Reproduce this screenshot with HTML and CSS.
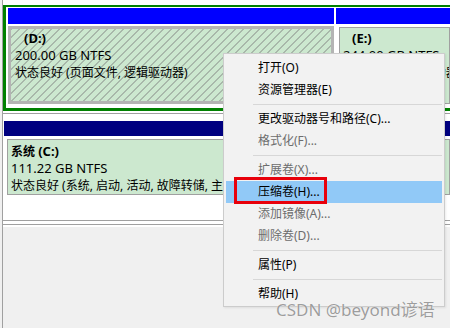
FILE: index.html
```html
<!DOCTYPE html>
<html lang="zh-CN">
<head>
<meta charset="utf-8">
<title>磁盘管理</title>
<link rel="stylesheet" href="styles.css">
</head>
<body>
<div class="screen">
  <div class="disk d1">
    <div class="ext">
      <div class="part p-d">
        <div class="hdr blue"></div>
        <div class="body sel">
          <div class="ln lbl"><b>(D:)</b></div>
          <div class="ln lat">200.00 GB NTFS</div>
          <div class="ln">状态良好 (页面文件, 逻辑驱动器)</div>
        </div>
      </div>
      <div class="part p-e">
        <div class="hdr blue"></div>
        <div class="body">
          <div class="ln lbl"><b>(E:)</b></div>
          <div class="ln lat">244.00 GB NTFS</div>
          <div class="ln">状态良好 (逻辑驱动器)</div>
        </div>
      </div>
    </div>
  </div>
  <div class="disk d2">
    <div class="part p-c">
      <div class="hdr navy"></div>
      <div class="body">
        <div class="ln"><b>系统 <span class="lat">(C:)</span></b></div>
        <div class="ln lat">111.22 GB NTFS</div>
        <div class="ln">状态良好 (系统, 启动, 活动, 故障转储, 主分区)</div>
      </div>
    </div>
  </div>
  <div class="sep"></div>

  <ul class="menu">
    <li class="item">打开(O)</li>
    <li class="item">资源管理器(E)</li>
    <li class="rule"></li>
    <li class="item">更改驱动器号和路径(C)...</li>
    <li class="item off">格式化(F)...</li>
    <li class="rule"></li>
    <li class="item off">扩展卷(X)...</li>
    <li class="item hot">压缩卷(H)...<span class="mark"></span></li>
    <li class="item off">添加镜像(A)...</li>
    <li class="item off">删除卷(D)...</li>
    <li class="rule"></li>
    <li class="item">属性(P)</li>
    <li class="rule"></li>
    <li class="item">帮助(H)</li>
  </ul>

  <div class="wm">CSDN @beyond谚语</div>
</div>
</body>
</html>
```
FILE: styles.css
```css
* { box-sizing: border-box; }
html, body { margin: 0; padding: 0; }
body {
  width: 450px;
  height: 328px;
  overflow: hidden;
  background: #f0f0f0;
  font-family: "Noto Sans", "Noto Sans CJK SC", sans-serif;
  font-size: 12px;
  color: #000;
}
.screen {
  position: relative;
  height: 328px;
  margin-left: 2px;
  border-left: 1px solid #a0a0a0;
}
.disk {
  background: #fff;
  overflow: hidden;
  border-bottom: 1px solid #a0a0a0;
}
.d1 { padding: 5px 0 2px 0; height: 114px; }
.ext {
  display: flex;
  gap: 2px;
  height: 106px;
  border: 3px solid #008000;
  border-top-width: 2px;
  border-right: 0;
  padding: 1px 0 4px 2px;
}
.part { display: flex; flex-direction: column; min-width: 0; }
.p-d { width: 326px; flex: none; }
.p-e { flex: 1; }
.hdr { height: 16px; flex: none; }
.blue { background: #0000ff; }
.navy { background: #000080; height: 15px; }
.body {
  flex: 1;
  margin: 3px 0 0 3px;
  border: 1px solid #a0a0a0;
  background: #cce8cf;
  padding: 2px 0 0 3px;
  white-space: nowrap;
  overflow: hidden;
}
.body.sel {
  margin: 2px 0 0 0;
  border: 3px solid #b4b4b4;
  padding: 1px 0 0 4px;
  background: repeating-linear-gradient(-45deg, #cce8cf 0 4.7px, #a8b8aa 4.7px 5.66px);
}
.ln { line-height: 17px; height: 17px; }
.lat { font-size: 13px; }
.lbl b { margin-left: 9px; font-size: 13px; }
b { font-weight: 700; }

.d2 { padding: 7px 0 4px 1px; height: 107px; }
.p-c .body { height: 77px; padding-top: 3px; }

.sep {
  height: 6px;
  background: #fff;
  border-top: 3px solid #fff;
  border-bottom: 2px solid #fff;
  box-shadow: inset 0 -1px 0 #a0a0a0;
}

.menu {
  position: absolute;
  left: 220px;
  top: 53px;
  width: 222px;
  margin: 0;
  padding: 3px 2px 1px 2px;
  list-style: none;
  background: #f2f2f2;
  border: 1px solid #cccccc;
  box-shadow: 1px 1px 2px rgba(0,0,0,0.08);
}
.item {
  position: relative;
  height: 22px;
  line-height: 22px;
  padding-left: 32px;
  white-space: nowrap;
}
.item.off { color: #6d6d6d; }
.item.hot { background: #91c9f7; }
.rule {
  height: 7px;
  margin-left: 27px;
  background: linear-gradient(#d7d7d7, #d7d7d7) 0 3px / 100% 1px no-repeat;
}
.mark {
  position: absolute;
  left: 8px;
  top: -4px;
  width: 93px;
  height: 27px;
  border: 3px solid #e8000b;
}
.wm {
  position: absolute;
  left: 273px;
  top: 300px;
  font-size: 17px;
  line-height: 20px;
  color: rgba(120,120,120,0.72);
  text-shadow: 0 0 1px #fff;
  white-space: nowrap;
}
```
